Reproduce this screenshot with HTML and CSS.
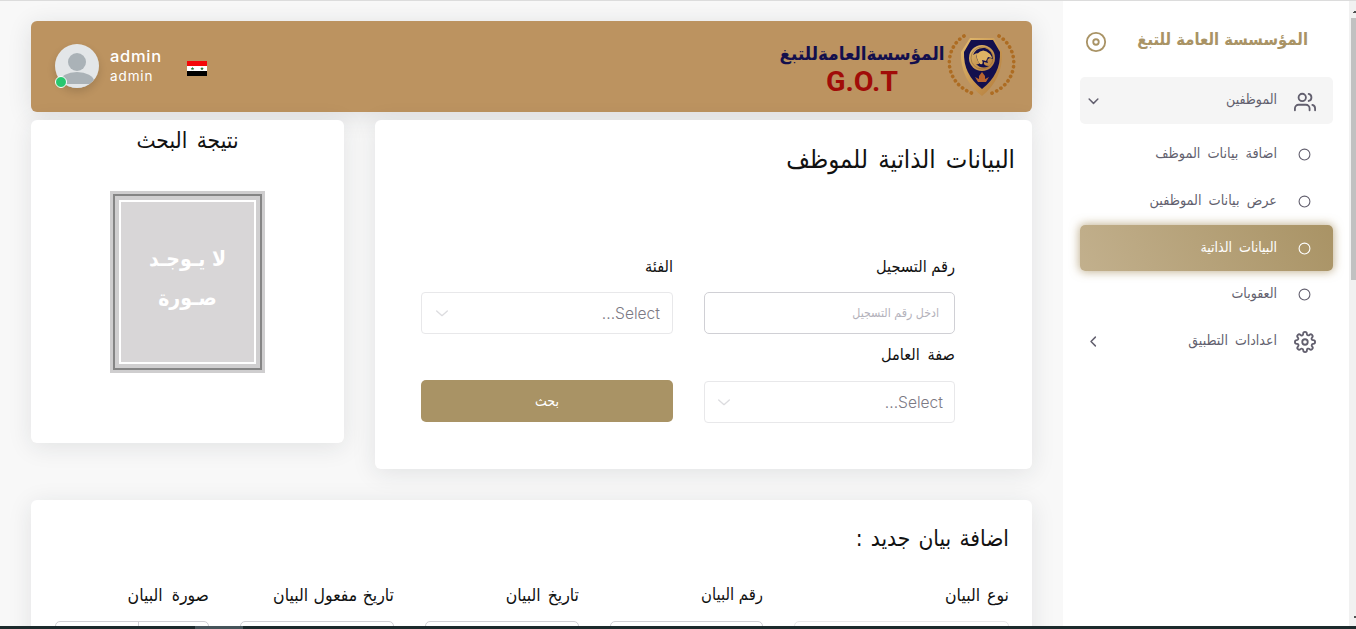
FILE: index.html
```html
<!DOCTYPE html>
<html lang="ar" dir="rtl">
<head>
<meta charset="utf-8">
<title>المؤسسة العامة للتبغ</title>
<link rel="stylesheet" href="styles.css">
</head>
<body>
<div class="app">
  <div class="scrollbar"><span class="arrow up"></span><span class="thumb"></span><span class="arrow down"></span></div>
  <aside class="sidebar">
    <div class="brand">
      <span class="brand-name">المؤسسسة العامة للتبغ</span>
      <svg class="disc" viewBox="0 0 24 24"><circle cx="12" cy="12" r="10"/><circle cx="12" cy="12" r="3"/></svg>
    </div>
    <nav class="menu">
      <a class="item open">
        <svg class="icon" viewBox="0 0 24 24"><path d="M17 21v-2a4 4 0 0 0-4-4H5a4 4 0 0 0-4 4v2"/><circle cx="9" cy="7" r="4"/><path d="M23 21v-2a4 4 0 0 0-3-3.87"/><path d="M16 3.13a4 4 0 0 1 0 7.75"/></svg>
        <span class="label">الموظفين</span>
        <svg class="chev" viewBox="0 0 24 24"><path d="M5 8l7 7 7-7"/></svg>
      </a>
      <a class="item"><svg class="dot" viewBox="0 0 24 24"><circle cx="12" cy="12" r="10"/></svg><span class="label wide">اضافة بيانات الموظف</span></a>
      <a class="item"><svg class="dot" viewBox="0 0 24 24"><circle cx="12" cy="12" r="10"/></svg><span class="label wide">عرض بيانات الموظفين</span></a>
      <a class="item active"><svg class="dot" viewBox="0 0 24 24"><circle cx="12" cy="12" r="10"/></svg><span class="label">البيانات الذاتية</span></a>
      <a class="item"><svg class="dot" viewBox="0 0 24 24"><circle cx="12" cy="12" r="10"/></svg><span class="label">العقوبات</span></a>
      <a class="item">
        <svg class="icon" viewBox="0 0 24 24"><circle cx="12" cy="12" r="3"/><path d="M19.4 15a1.65 1.65 0 0 0 .33 1.82l.06.06a2 2 0 0 1-2.83 2.83l-.06-.06a1.65 1.65 0 0 0-2.8 1.17V21a2 2 0 0 1-4 0v-.09A1.65 1.65 0 0 0 9 19.4a1.65 1.65 0 0 0-1.82.33l-.06.06a2 2 0 0 1-2.83-2.83l.06-.06A1.65 1.65 0 0 0 3.09 14H3a2 2 0 0 1 0-4h.09A1.65 1.65 0 0 0 4.6 9a1.65 1.65 0 0 0-.33-1.82l-.06-.06a2 2 0 0 1 2.83-2.83l.06.06A1.65 1.65 0 0 0 10 3.09V3a2 2 0 0 1 4 0v.09a1.65 1.65 0 0 0 2.8 1.26l.06-.06a2 2 0 0 1 2.83 2.83l-.06.06A1.65 1.65 0 0 0 20.91 10H21a2 2 0 0 1 0 4h-.09a1.65 1.65 0 0 0-1.51 1z"/></svg>
        <span class="label">اعدادات التطبيق</span>
        <svg class="chev" viewBox="0 0 24 24"><path d="M15 19l-7-7 7-7"/></svg>
      </a>
    </nav>
  </aside>
  <main class="content">
    <header class="topbar">
      <svg class="logo" viewBox="0 0 236 66" direction="ltr">
        <defs>
          <linearGradient id="gold" x1="0" y1="0" x2="1" y2="1"><stop offset="0" stop-color="#e3bb70"/><stop offset="1" stop-color="#b07838"/></linearGradient>
        </defs>
        <text class="logo-ar" x="82" y="26" direction="rtl" text-anchor="middle" textLength="165" lengthAdjust="spacingAndGlyphs">المؤسسةالعامةللتبغ</text>
        <text class="logo-en" x="82" y="57" text-anchor="middle" textLength="72" lengthAdjust="spacingAndGlyphs">G.O.T</text>
        <path class="laurel" d="M184 2C163 15 163 49 194 60M219 2C240 15 240 49 210 60"/>
        <path fill="url(#gold)" d="M190 4H214L222 18Q223 45 202 62Q180 45 181 18Z"/>
        <path fill="#130f4d" d="M191 6H213L220 18Q221 40 202 55Q183 40 184 18Z"/>
        <circle cx="202" cy="24" r="13" fill="url(#gold)"/>
        <circle cx="202" cy="24" r="11" fill="none" stroke="#8d673b" stroke-width=".6"/>
        <path fill="#130f4d" d="M193 21Q196 13 205 14Q212 16 213 25L210 24Q206 25 208 29L204 28Q203 32 209 32Q202 36 196 30Q201 31 198 27Q195 22 198 19Q196 19 193 21Z"/>
        <path fill="#dfb364" d="M197 20Q203 13 210 20Q212 23 212 24L208 23L206 27L202 26Q204 31 200 30Q196 25 197 20Z"/>
        <path fill="#b8632e" d="M195 43L199 45L199 42L202 38L205 42L205 45L209 43L206 48H198Z"/>
      </svg>
      <div class="spacer"></div>
      <svg class="flag" viewBox="0 0 20 15"><path fill="#f40808" d="M0 0h20v5H0z"/><path fill="#fff" d="M0 5h20v5H0z"/><path fill="#000" d="M0 10h20v5H0z"/><path fill="#2b7a3c" d="M5.500 5.800l.5 1.300h1.300l-1 .8.4 1.300-1.200-.8-1.200.8.4-1.300-1-.8H5zM15 5.800l.5 1.300h1.300l-1 .8.4 1.300-1.200-.8-1.200.8.4-1.300-1-.8h1.300z"/></svg>
      <div class="user"><span class="user-name">admin</span><span class="user-role">admin</span></div>
      <div class="avatar">
        <svg viewBox="0 0 44 44"><defs><clipPath id="round"><circle cx="22" cy="22" r="22"/></clipPath></defs><g clip-path="url(#round)"><path fill="#e3e6e8" d="M0 0h44v44H0z"/><circle cx="22" cy="18" r="9" fill="#aab2b7"/><ellipse cx="22" cy="37" rx="17" ry="9" fill="#aab2b7"/><path fill="#e3e6e8" d="M0 40h44v4H0z"/></g></svg>
        <span class="status"></span>
      </div>
    </header>
    <div class="row">
      <section class="card form-card">
        <h2 class="title">البيانات الذاتية للموظف</h2>
        <div class="form">
          <div class="field"><label>رقم التسجيل</label><div class="control input">ادخل رقم التسجيل</div></div>
          <div class="field"><label>الفئة</label><div class="control"><span>Select...</span><svg viewBox="0 0 24 24"><path d="M4 9l8 7 8-7"/></svg></div></div>
          <div class="field second"><label>صفة العامل</label><div class="control"><span>Select...</span><svg viewBox="0 0 24 24"><path d="M4 9l8 7 8-7"/></svg></div></div>
          <button class="search">بحث</button>
        </div>
      </section>
      <section class="card result-card">
        <h3 class="result-title">نتيجة البحث</h3>
        <div class="frame"><div class="frame-mid"><div class="photo"><span>لا يـوجـد</span><span>صـورة</span></div></div></div>
      </section>
    </div>
    <section class="card add-card">
      <h3 class="add-title">اضافة بيان جديد :</h3>
      <div class="columns">
        <div class="col light"><label>نوع البيان</label><div class="box"></div></div>
        <div class="col"><label class="tight">رقم البيان</label><div class="box"></div></div>
        <div class="col"><label>تاريخ البيان</label><div class="box"></div></div>
        <div class="col"><label class="long">تاريخ مفعول البيان</label><div class="box"></div></div>
        <div class="col"><label class="loose">صورة البيان</label><div class="box file"></div></div>
      </div>
    </section>
  </main>
  <div class="taskbar"></div>
</div>
</body>
</html>
```
FILE: styles.css
```css
* { box-sizing: border-box; }
html, body { margin: 0; height: 100%; overflow: hidden; }
body { font-family: "DejaVu Sans Condensed", "DejaVu Sans", sans-serif; font-stretch: condensed; color: #111; background: #f8f8f8; }
h2, h3 { margin: 0; font-weight: 400; }
label { white-space: nowrap; }
.app { position: relative; display: flex; width: 1356px; height: 629px; overflow: hidden; border-top: 1px solid #dcdcdc; }
.scrollbar { flex: none; width: 7px; background: #f1f1f1; position: relative; display: flex; flex-direction: column; align-items: flex-start; padding-top: 17px; }
.thumb { width: 5px; height: 262px; background: #c1c1c1; align-self: flex-start; }
.scrollbar { direction: ltr; padding-left: 2px; }
.arrow { position: absolute; right: 0; width: 3px; height: 3px; background: linear-gradient(135deg, transparent 50%, #505050 50%); }
.arrow.up { top: 9px; }
.arrow.down { bottom: 10px; background: linear-gradient(45deg, transparent 50%, #505050 50%); }
.sidebar { flex: none; width: 286px; background: #fff; padding: 0 16px 0 17px; }
.brand { height: 76px; display: flex; justify-content: space-between; align-items: center; padding: 6px 25px 0 5px; color: #a99365; }
.brand-name { font-size: 16.500px; font-weight: 700; margin-top: -6px; white-space: nowrap; }
.disc { width: 22px; height: 22px; }
svg { display: block; flex: none; }
.disc, .icon, .dot, .chev, .control svg { fill: none; stroke: currentColor; stroke-width: 2; stroke-linecap: round; stroke-linejoin: round; }
.menu { display: flex; flex-direction: column; }
.item { display: flex; align-items: center; height: 47px; padding: 0 17px 0 6px; border-radius: 5px; color: #625f6e; font-size: 14px; }
.item.open { background: #f5f5f5; }
.item.open + .item { margin-top: 7px; }
.item.active { color: #fff; height: 46px; background: linear-gradient(-118deg, #a99365, #c2b08d); box-shadow: 0 0 10px 1px rgba(169,147,101,.7); }
.icon { width: 22px; height: 22px; margin-left: 17px; }
.open .icon { margin-top: 2px; }
.dot { width: 13px; height: 13px; margin: 0 5px 0 21px; }
.label { flex: 1; white-space: nowrap; margin-top: -3px; word-spacing: 3px; }
.wide { font-size: 14.300px; }
.chev { width: 15px; height: 15px; margin-top: 2px; stroke-width: 2.300; }
.item:last-child .chev { margin-top: -1px; }
.content { flex: 1; padding: 20px 31px 0; display: flex; flex-direction: column; }
.topbar { flex: none; height: 91px; border-radius: 6px; background: #bc9360; box-shadow: 0 4px 24px rgba(34,41,47,.12); display: flex; align-items: center; padding: 0 16px 0 24px; }
.logo { width: 236px; height: 66px; margin-top: 1px; }
.logo-ar { font: 700 18.500px "DejaVu Sans Condensed", "DejaVu Sans", sans-serif; fill: #130f4d; }
.logo-en { font: 700 28.500px Roboto, sans-serif; fill: #a10c08; }
.laurel { fill: none; stroke: #ad6c22; stroke-width: 3.600; stroke-linecap: round; stroke-dasharray: .2 4.900; }
.spacer { flex: 1; }
.flag { width: 20px; height: 15px; margin: 4px 0 0 25px; }
.user { display: flex; flex-direction: column; color: #fff; font-family: Inter, sans-serif; font-stretch: normal; text-align: left; direction: ltr; line-height: 20px; margin-top: -2px; }
.user-name { font-size: 16.500px; font-weight: 500; letter-spacing: .7px; }
.user-role { font-size: 13.500px; letter-spacing: .9px; }
.avatar { position: relative; width: 44px; height: 44px; margin: -2px 11px 0 0; border-radius: 50%; box-shadow: 0 4px 8px rgba(0,0,0,.14); }
.status { position: absolute; left: 0; bottom: 0; width: 12px; height: 12px; border-radius: 50%; background: #28c76f; border: 1px solid #fff; }
.row { flex: none; height: 388px; display: flex; justify-content: space-between; align-items: flex-start; padding-top: 8px; }
.card { background: #fff; border-radius: 6px; box-shadow: 0 4px 24px rgba(34,41,47,.1); }
.form-card { width: 657px; height: 349px; padding: 21px 17px 0 46px; }
.title { font-size: 25.500px; height: 113px; line-height: 36px; white-space: nowrap; word-spacing: 3px; }
.form { display: grid; grid-template-columns: 251px 252px; column-gap: 31px; padding-right: 60px; }
.field { display: flex; flex-direction: column; height: 88px; }
.field label { font-size: 16.200px; height: 38px; line-height: 26px; }
.second label { height: 39px; word-spacing: 3px; }
.control { height: 42px; border: 1px solid #e8e8ea; border-radius: 4px; padding: 0 12px 0 12px; display: flex; align-items: center; justify-content: space-between; color: #7c7984; font: 300 15.600px Inter, sans-serif; }
.second .control { padding: 0 11px; }
.control svg { width: 16px; height: 16px; color: #dcdcdf; }
.input { border-color: #d0d0d5; border-radius: 5px; color: #b4b2bb; padding-right: 15px; font: 12.300px "DejaVu Sans Condensed", "DejaVu Sans", sans-serif; }
.search { margin-top: 38px; height: 42px; border: 0; border-radius: 5px; background: #a99365; color: #fff; font: 14px "DejaVu Sans Condensed", "DejaVu Sans", sans-serif; }
.result-card { width: 313px; height: 323px; display: flex; flex-direction: column; align-items: center; }
.result-title { font-size: 22.500px; height: 71px; line-height: 41px; word-spacing: 3px; }
.frame { width: 155px; height: 182px; padding: 3px; background: #cfcecf; }
.frame-mid { height: 100%; border: 2px solid #858585; padding: 4px; background: #d0cfd0; }
.photo { height: 100%; border: 2px solid #fff; background: #d8d6d7; color: #fff; font: 700 21px/39px "DejaVu Sans Condensed", "DejaVu Sans", sans-serif; display: flex; flex-direction: column; align-items: center; padding-top: 38px; }
.add-card { flex: none; height: 200px; padding: 17px 23px 0; }
.add-title { font-size: 22.500px; height: 66px; line-height: 42px; word-spacing: 1.800px; }
.columns { display: grid; grid-template-columns: 215px 153px 154px 154px 154px; column-gap: 31px; }
.col label { display: block; font-size: 17.500px; height: 38px; line-height: 24px; word-spacing: 2px; }
.col .tight { font-size: 16.500px; word-spacing: 0; }
.col .long { word-spacing: .5px; }
.col .loose { word-spacing: 4px; }
.box { height: 42px; border: 1px solid #d0d0d5; border-radius: 5px; }
.light .box { border-color: #e8e8ea; }
.file { background: linear-gradient(#d0d0d5, #d0d0d5) 82px 0 / 1px 100% no-repeat; }
.taskbar { position: absolute; left: 0; right: 0; bottom: 0; height: 3px; background: linear-gradient(90deg, transparent 195px, #46545a 195px 243px, transparent 243px), #1c2a2c; }
```
